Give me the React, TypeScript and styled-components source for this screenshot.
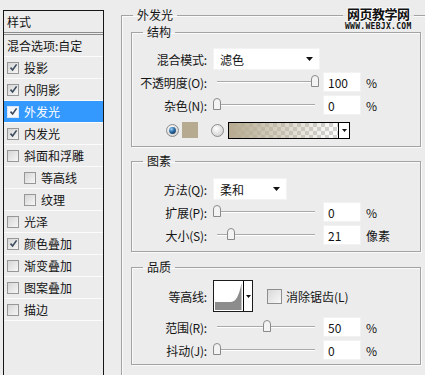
import React from 'react';
import styled, { createGlobalStyle } from 'styled-components';

const Global = createGlobalStyle`
  html, body { margin: 0; padding: 0; background: #ececec; overflow: hidden; }
  body {
    width: 425px; height: 375px;
    font-family: "Noto Sans CJK SC", "Liberation Sans", sans-serif;
    font-size: 12px; color: #141414;
  }
`;

const Page = styled.div`
  position: relative;
  display: flex;
  align-items: flex-start;
  width: 425px;
  height: 375px;
  overflow: hidden;
  background: #ececec;
`;

/* ---------- left style list ---------- */
const LeftPanel = styled.div`
  flex-shrink: 0;
  margin: 10px 0 0 3px;
  width: 99px;
  height: 380px;
  border: 1px solid #161616;
  border-bottom: none;
`;

const PanelHeader = styled.div`
  height: 21px;
  line-height: 21px;
  padding-left: 3px;
  border-bottom: 3px double #8c8c8c;
`;

const StyleItem = styled.div<{ $selected?: boolean; $indent?: number }>`
  display: flex;
  align-items: center;
  gap: 5px;
  height: 21px;
  padding-left: ${p => p.$indent ?? 3}px;
  border-bottom: 1px solid #fbfbfb;
  background: ${p => (p.$selected ? '#3399ff' : 'transparent')};
  color: ${p => (p.$selected ? '#ffffff' : '#141414')};
  white-space: nowrap;
  line-height: 21px;
`;

const SmallCheck = styled.span<{ $selected?: boolean }>`
  display: inline-flex;
  align-items: center;
  justify-content: center;
  box-sizing: border-box;
  width: 12px;
  height: 12px;
  border: 1px solid ${p => (p.$selected ? '#d8e6f5' : '#979797')};
  background: ${p => (p.$selected ? '#f4f8fc' : 'linear-gradient(135deg, #d6d6d6, #f6f6f6)')};
  flex-shrink: 0;
`;

const CheckMark = () => (
  <svg width="9" height="9" viewBox="0 0 9 9">
    <path d="M1.5 4.6 L3.6 7 L7.6 1.4" fill="none" stroke="#3a4a5c" strokeWidth="1.6" />
  </svg>
);

/* ---------- right groups ---------- */
const Main = styled.div`
  flex-shrink: 0;
  margin-left: 17px;
`;

const OuterGroup = styled.fieldset`
  margin: 7px 0 0 0;
  padding: 0 10px 20px 9px;
  width: 290px;
  min-width: 0;
  border: 1px solid #a3a3a3;
  box-shadow: inset 1px 1px 0 #fafafa;
`;

const Legend = styled.legend<{ $offset: number }>`
  margin-left: ${p => p.$offset}px;
  padding: 0 4px;
  font-size: 12px;
  line-height: 16px;
`;

const Group = styled.fieldset<{ $mt: number; $pb: number }>`
  box-sizing: border-box;
  margin: ${p => p.$mt}px 0 0 0;
  padding: 0 0 ${p => p.$pb}px 8px;
  width: 290px;
  min-width: 0;
  border: 1px solid #a3a3a3;
  box-shadow: inset 1px 1px 0 #fafafa, 1px 1px 0 #fafafa;
`;

const FormRow = styled.div<{ $mt?: number; $h?: number }>`
  display: flex;
  align-items: center;
  height: ${p => p.$h ?? 22}px;
  margin-top: ${p => p.$mt ?? 1}px;
`;

const Label = styled.span`
  flex-shrink: 0;
  width: 67px;
  margin-right: 6px;
  text-align: right;
  white-space: nowrap;
  letter-spacing: -0.2px;
`;

const Select = styled.div<{ $w: number }>`
  box-sizing: border-box;
  display: flex;
  align-items: center;
  justify-content: space-between;
  width: ${p => p.$w}px;
  height: 22px;
  padding: 0 6px 0 6px;
  background: #ffffff;
  border: 1px solid #f3f3f3;
`;

const Arrow = () => (
  <svg width="7" height="4" viewBox="0 0 7 4">
    <path d="M0 0 H7 L3.5 4 Z" fill="#111" />
  </svg>
);

const SliderBox = styled.div`
  position: relative;
  flex-shrink: 0;
  width: 110px;
  height: 22px;
`;

const Track = styled.div`
  position: absolute;
  left: 4px;
  right: 8px;
  top: 10px;
  height: 1px;
  background: #a9a9a9;
  border-bottom: 1px solid #ffffff;
`;

const Thumb = styled.svg`
  position: absolute;
  top: 4px;
`;

const NumBox = styled.div`
  box-sizing: border-box;
  flex-shrink: 0;
  width: 38px;
  height: 20px;
  padding-left: 4px;
  line-height: 19px;
  background: #ffffff;
  border: 1px solid #f2f2f2;
`;

const Unit = styled.span`
  margin-left: 5px;
  white-space: nowrap;
`;

const ColorRow = styled.div`
  display: flex;
  align-items: center;
  height: 20px;
  margin-top: 4px;
  padding-left: 26px;
`;

const Swatch = styled.div`
  width: 16px;
  height: 16px;
  margin-left: 3px;
  background: #b6ab90;
`;

const Gradient = styled.div`
  box-sizing: border-box;
  display: flex;
  width: 122px;
  height: 17px;
  margin-left: 4px;
  border: 1px solid #000;
  background: #fff;
`;

const GradientFill = styled.div`
  flex: 1;
  background-image:
    linear-gradient(to right, rgba(182,171,144,1) 0%, rgba(182,171,144,0.55) 45%, rgba(182,171,144,0) 100%),
    conic-gradient(#d4d4d4 0 25%, #ffffff 0 50%, #d4d4d4 0 75%, #ffffff 0);
  background-size: 100% 100%, 8px 8px;
`;

const DropPart = styled.div`
  display: flex;
  align-items: center;
  justify-content: center;
  width: 10px;
  border-left: 1px solid #000;
  background: #fff;
`;

const SmallArrow = () => (
  <svg width="5" height="3" viewBox="0 0 5 3">
    <path d="M0 0 H5 L2.5 3 Z" fill="#111" />
  </svg>
);

const Contour = styled.div`
  box-sizing: border-box;
  display: flex;
  flex-shrink: 0;
  width: 40px;
  height: 32px;
  border: 1px solid #1c1c1c;
  background: #fff;
`;

const ContourThumb = styled.div`
  flex: 1;
  padding: 1px;
  display: flex;
`;

const BigCheck = styled.span`
  box-sizing: border-box;
  width: 15px;
  height: 15px;
  margin: 0 4px 0 14px;
  border: 1px solid #8e8e8e;
  background: linear-gradient(135deg, #d9d9d9, #f8f8f8);
`;

const Watermark = styled.div`
  position: absolute;
  left: 343px;
  top: 6px;
  display: flex;
  flex-direction: column;
  align-items: center;
  background: rgba(236,236,236,0.85);
  padding: 0 2px;
`;

const WmTitle = styled.span`
  font-size: 13px;
  line-height: 16px;
  font-weight: 700;
  letter-spacing: -0.5px;
  color: #111;
  text-shadow: 1px 0 0 #fff, -1px 0 0 #fff, 0 1px 0 #fff, 0 -1px 0 #fff;
`;

const WmUrl = styled.span`
  font-family: "DejaVu Sans Mono", "Liberation Mono", monospace;
  font-size: 8px;
  line-height: 9px;
  font-weight: 700;
  letter-spacing: 0.3px;
  color: #111;
`;

/* ---------- small pieces ---------- */
const Radio = ({ on }: { on?: boolean }) => (
  <svg width="13" height="13" viewBox="0 0 13 13">
    <defs>
      <radialGradient id={on ? 'rOn' : 'rOff'} cx="0.4" cy="0.35" r="0.7">
        <stop offset="0" stopColor="#ffffff" />
        <stop offset="1" stopColor="#cfcfcf" />
      </radialGradient>
      <radialGradient id="dot" cx="0.35" cy="0.3" r="0.8">
        <stop offset="0" stopColor="#9fd3f7" />
        <stop offset="0.5" stopColor="#2c6fa8" />
        <stop offset="1" stopColor="#0e2f55" />
      </radialGradient>
    </defs>
    <circle cx="6.5" cy="6.5" r="6" fill={`url(#${on ? 'rOn' : 'rOff'})`} stroke="#8d8d8d" />
    {on && <circle cx="6.5" cy="6.5" r="3.4" fill="url(#dot)" />}
  </svg>
);

const Slider = ({ pct }: { pct: number }) => (
  <SliderBox>
    <Track />
    <Thumb width="8" height="12" viewBox="0 0 8 12" style={{ left: `${4 + pct * 98 - 4}px` }}>
      <path d="M0.5 4 Q0.5 0.5 4 0.5 Q7.5 0.5 7.5 4 V11.5 H0.5 Z" fill="#f3f3f3" stroke="#8a8a8a" />
    </Thumb>
  </SliderBox>
);

const SliderRow = ({ label, pct, value, unit, mt }: { label: string; pct: number; value: string; unit: string; mt?: number }) => (
  <FormRow $mt={mt}>
    <Label>{label}</Label>
    <Slider pct={pct} />
    <NumBox>{value}</NumBox>
    <Unit>{unit}</Unit>
  </FormRow>
);

const items = [
  { label: '投影', checked: true },
  { label: '内阴影', checked: true },
  { label: '外发光', checked: true, selected: true },
  { label: '内发光', checked: true },
  { label: '斜面和浮雕', checked: false },
  { label: '等高线', checked: false, indent: 20 },
  { label: '纹理', checked: false, indent: 20 },
  { label: '光泽', checked: false },
  { label: '颜色叠加', checked: true },
  { label: '渐变叠加', checked: false },
  { label: '图案叠加', checked: false },
  { label: '描边', checked: false },
];

export default function App() {
  return (
    <Page>
      <Global />
      <LeftPanel>
        <PanelHeader>样式</PanelHeader>
        <StyleItem>混合选项:自定</StyleItem>
        {items.map(it => (
          <StyleItem key={it.label} $selected={it.selected} $indent={it.indent}>
            <SmallCheck $selected={it.selected}>{it.checked && <CheckMark />}</SmallCheck>
            {it.label}
          </StyleItem>
        ))}
      </LeftPanel>

      <Main>
        <OuterGroup>
          <Legend $offset={2}>外发光</Legend>

          <Group $mt={1} $pb={6}>
            <Legend $offset={3}>结构</Legend>
            <FormRow $mt={8}>
              <Label>混合模式:</Label>
              <Select $w={107}>
                <span>滤色</span>
                <Arrow />
              </Select>
            </FormRow>
            <SliderRow label="不透明度(O):" pct={1} value="100" unit="%" />
            <SliderRow label="杂色(N):" pct={0} value="0" unit="%" />
            <ColorRow>
              <Radio on />
              <Swatch />
              <span style={{ width: 13 }} />
              <Radio />
              <Gradient>
                <GradientFill />
                <DropPart>
                  <SmallArrow />
                </DropPart>
              </Gradient>
            </ColorRow>
          </Group>

          <Group $mt={6} $pb={5}>
            <Legend $offset={3}>图素</Legend>
            <FormRow $mt={9}>
              <Label>方法(Q):</Label>
              <Select $w={74}>
                <span>柔和</span>
                <Arrow />
              </Select>
            </FormRow>
            <SliderRow label="扩展(P):" pct={0} value="0" unit="%" />
            <SliderRow label="大小(S):" pct={0.14} value="21" unit="像素" />
          </Group>

          <Group $mt={7} $pb={3}>
            <Legend $offset={3}>品质</Legend>
            <FormRow $mt={5} $h={32}>
              <Label>等高线:</Label>
              <Contour>
                <ContourThumb>
                  <svg width="27" height="28" viewBox="0 0 27 28">
                    <path d="M0 20 L16 20 C21 19.5 24 14 26.5 1 L26.5 28 L0 28 Z" fill="#8c8c8c" />
                  </svg>
                </ContourThumb>
                <DropPart>
                  <SmallArrow />
                </DropPart>
              </Contour>
              <BigCheck />
              <span>消除锯齿(L)</span>
            </FormRow>
            <SliderRow label="范围(R):" pct={0.51} value="50" unit="%" mt={4} />
            <SliderRow label="抖动(J):" pct={0} value="0" unit="%" />
          </Group>
        </OuterGroup>
      </Main>

      <Watermark>
        <WmTitle>网页教学网</WmTitle>
        <WmUrl>WWW.WEBJX.COM</WmUrl>
      </Watermark>
    </Page>
  );
}
